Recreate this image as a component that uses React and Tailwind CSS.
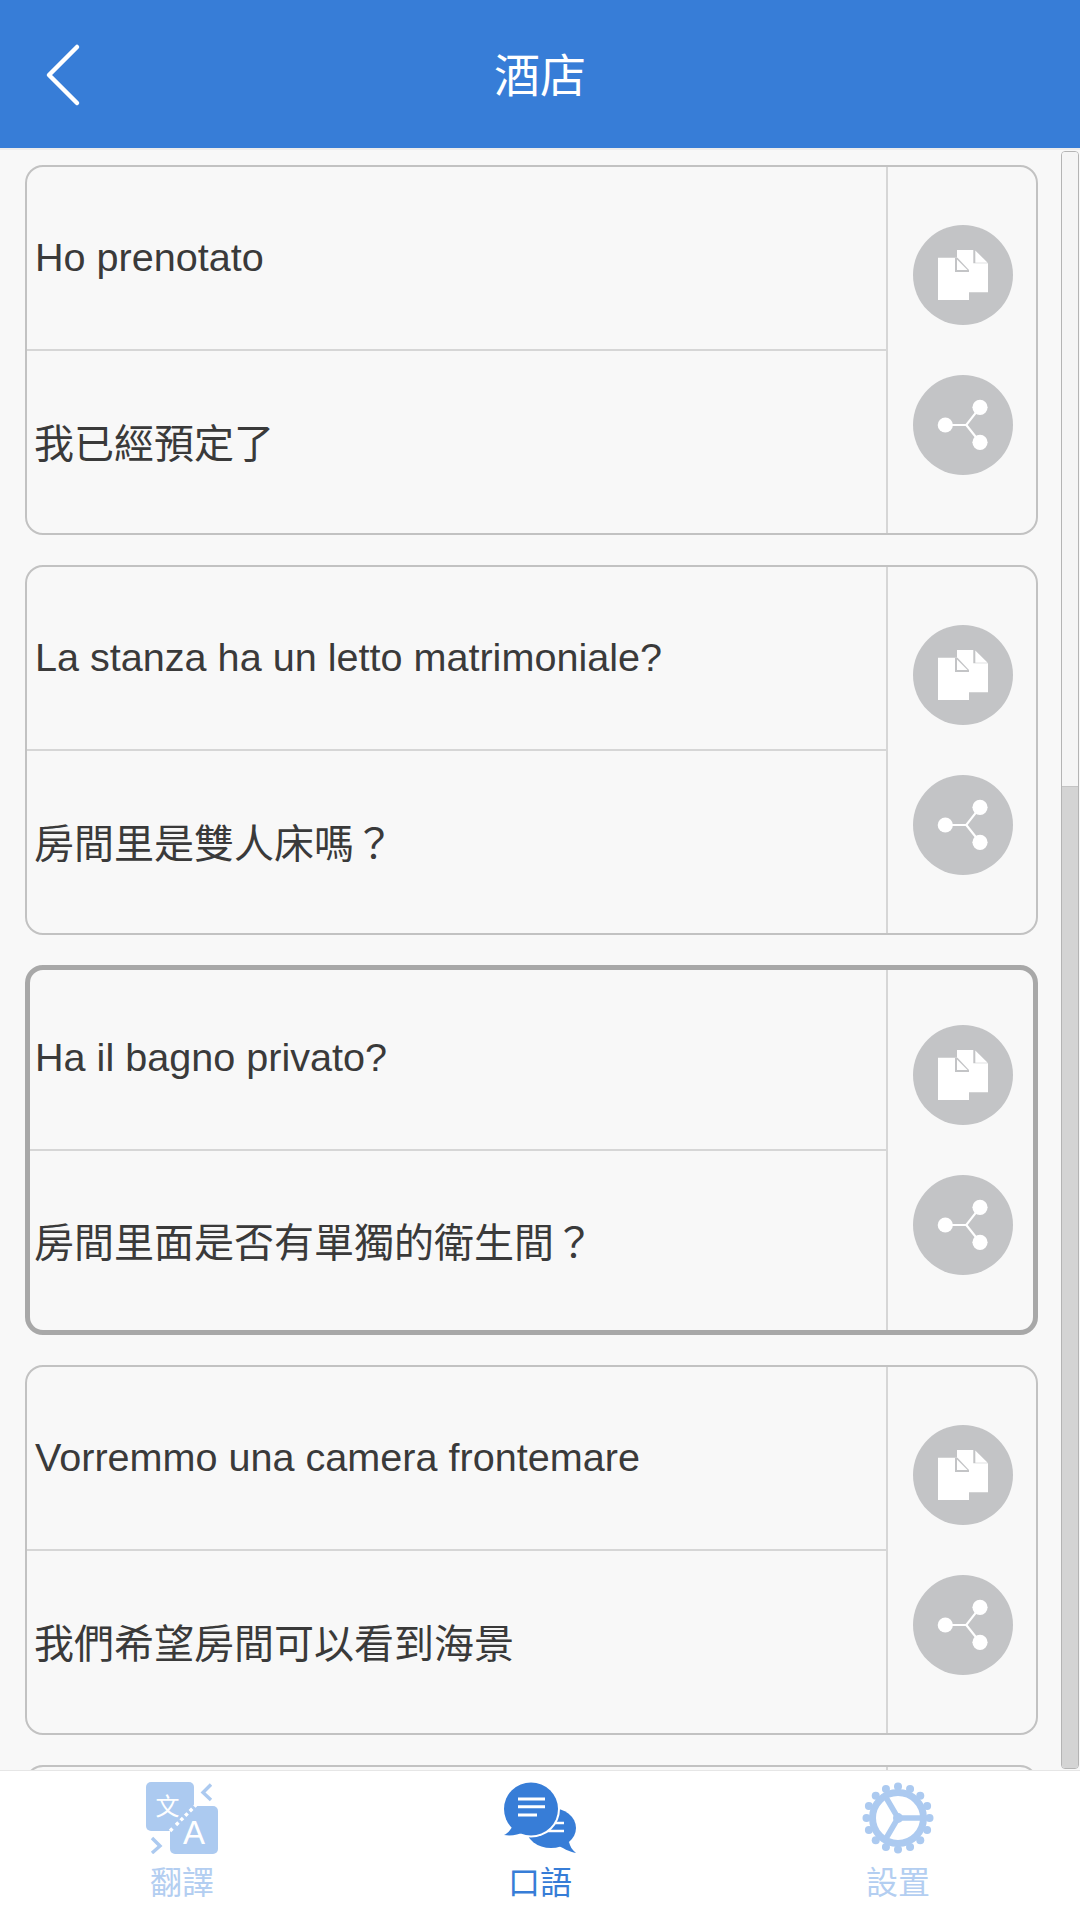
const FONT = "font-['Liberation_Sans','Noto_Sans_CJK_TC',sans-serif]";

const phrases = [
  { it: "Ho prenotato", zh: "我已經預定了" },
  { it: "La stanza ha un letto matrimoniale?", zh: "房間里是雙人床嗎？" },
  { it: "Ha il bagno privato?", zh: "房間里面是否有單獨的衛生間？", selected: true },
  { it: "Vorremmo una camera frontemare", zh: "我們希望房間可以看到海景" },
  { it: "", zh: "" },
];

function CopyIcon() {
  return (
    <svg viewBox="0 0 100 100" className="w-[100px] h-[100px]">
      <circle cx="50" cy="50" r="50" fill="#c3c4c6" />
      <path d="M44 25H60.3V38.3H75V67.3H44Z" fill="#fff" />
      <path d="M62.3 25.5L74.7 37.7H62.3Z" fill="#fff" />
      <path d="M25 32.7H44L56 45V75H25Z" fill="#fff" />
      <path d="M42 32.7H44.5L56 45V47H42Z" fill="#c3c4c6" />
      <path d="M44 34.500L54.5 45H44Z" fill="#fff" />
    </svg>
  );
}

function ShareIcon() {
  return (
    <svg viewBox="0 0 100 100" className="w-[100px] h-[100px]">
      <circle cx="50" cy="50" r="50" fill="#c3c4c6" />
      <path d="M32 50H53.3L67 32.3M53.3 50L67 67.3" fill="none" stroke="#fff" strokeWidth="2.2" />
      <circle cx="32.3" cy="50" r="7.6" fill="#fff" />
      <circle cx="67" cy="32.3" r="7.6" fill="#fff" />
      <circle cx="67" cy="67.3" r="7.6" fill="#fff" />
    </svg>
  );
}

function TranslateIcon() {
  return (
    <svg viewBox="0 0 72 72" className="w-[72px] h-[72px]">
      <rect x="0" y="0" width="48" height="49" rx="5" fill="#accaf0" />
      <rect x="24" y="24" width="48" height="48" rx="5" fill="#accaf0" />
      <path d="M24 49L27 46M30 43L50 23" fill="none" stroke="#fff" strokeWidth="3.4" strokeDasharray="3.5 3" />
      <path d="M65 2.5L57 10.5L65 18M6 56L14 64L6 71" fill="none" stroke="#accaf0" strokeWidth="3.4" />
      <text x="21.5" y="33" textAnchor="middle" fontSize="24" fill="#fff" fontFamily="Noto Sans CJK TC">文</text>
      <text x="48" y="62" textAnchor="middle" fontSize="33" fill="#fff" fontFamily="Liberation Sans">A</text>
    </svg>
  );
}

function ChatIcon() {
  return (
    <svg viewBox="0 0 72 72" className="w-[72px] h-[72px]">
      <ellipse cx="47" cy="46" rx="25" ry="20" fill="#377dd7" />
      <path d="M52 62C58 66 66 70 72 71C68 68 66 64 65 60Z" fill="#377dd7" />
      <path d="M40 41H60M40 49H60" stroke="#fff" strokeWidth="2.6" />
      <ellipse cx="27" cy="27" rx="29" ry="28.500" fill="#fff" />
      <path d="M9 42C8 47 4 51 0 53C7 54 14 53 20 50Z" fill="#377dd7" />
      <ellipse cx="27" cy="27" rx="27" ry="26.500" fill="#377dd7" />
      <path d="M14 17H41M14 24.800H41M14 33H33" stroke="#fff" strokeWidth="3" />
    </svg>
  );
}

function GearIcon() {
  const teeth = Array.from({ length: 16 }, (_, i) => (i * Math.PI) / 8);
  return (
    <svg viewBox="0 0 72 72" className="w-[72px] h-[72px]">
      {teeth.map((a, i) => (
        <circle key={i} cx={36 + 31.500 * Math.cos(a)} cy={36 + 31.500 * Math.sin(a)} r="4" fill="#accaf0" />
      ))}
      <circle cx="36" cy="36" r="25.500" fill="none" stroke="#accaf0" strokeWidth="7" />
      <path d="M60 36H36L24 15.500M36 36L24 56.500" fill="none" stroke="#accaf0" strokeWidth="5.500" />
      <circle cx="36" cy="36" r="5" fill="#accaf0" />
    </svg>
  );
}

function PhraseCard({ phrase }) {
  // the selected card has a thicker border, dividers stay at the same place
  const sel = phrase.selected;
  return (
    <div
      className={`flex shrink-0 h-[370px] w-[1013px] rounded-[18px] overflow-hidden ${
        sel ? "border-[5px] border-[#a8a8a8]" : "border-2 border-[#c2c2c2]"
      }`}
    >
      <div className="flex-1 flex flex-col">
        <div className={`flex items-center text-[39.6px] border-b-2 border-[#d6d6d6] ${sel ? "h-[181px] pl-[5px] pb-[3px]" : "h-[184px] pl-[8px]"}`}>
          {phrase.it}
        </div>
        <div className={`flex-1 flex items-center pt-[4px] ${sel ? "pl-[4px]" : "pl-[7px]"}`}>{phrase.zh}</div>
      </div>
      <div
        className={`flex flex-col items-center gap-[50px] border-l-2 border-[#d6d6d6] ${
          sel ? "w-[147px] pt-[55px] pl-[5px]" : "w-[150px] pt-[58px] pl-[2px]"
        }`}
      >
        <CopyIcon />
        <ShareIcon />
      </div>
    </div>
  );
}

export default function App() {
  const tabs = [
    { label: "翻譯", icon: <TranslateIcon />, color: "text-[#b3cef1]" },
    { label: "口語", icon: <ChatIcon />, color: "text-[#377dd7]" },
    { label: "設置", icon: <GearIcon />, color: "text-[#b3cef1]" },
  ];

  return (
    <div className={`${FONT} w-[1080px] h-[1920px] flex flex-col overflow-hidden bg-[#f8f8f8] text-[#3a3a3a] text-[40px]`}>
      <header className="h-[148px] shrink-0 bg-[#377dd7] flex items-center justify-center relative">
        <svg viewBox="0 0 40 64" className="absolute left-[44px] top-[43px] w-[40px] h-[64px]">
          <path d="M33 4L5 32L33 60" fill="none" stroke="#fff" strokeWidth="4.500" strokeLinecap="round" strokeLinejoin="round" />
        </svg>
        <h1 className="text-white text-[46px] font-normal pt-[4px]">酒店</h1>
      </header>
      <div className="h-[2px] shrink-0 bg-[#ececec]" />

      <main className="flex-1 min-h-0 flex">
        <div className="pl-[25px] pt-[15px] flex flex-col gap-[30px] overflow-hidden">
          {phrases.map((p, i) => (
            <PhraseCard key={i} phrase={p} />
          ))}
        </div>
        <div className="ml-[23px] my-px w-[18px] flex flex-col rounded-[4px] border border-[#b4b4b4] overflow-hidden">
          <div className="h-[635px] bg-[#f5f5f5] border-b border-[#c4c4c4]" />
          <div className="flex-1 bg-[#d4d4d4]" />
        </div>
      </main>

      <nav className="h-[150px] shrink-0 bg-white border-t border-[#e6e6e6] grid grid-cols-[358px_358px_358px] justify-center">
        {tabs.map((t) => (
          <div key={t.label} className={`flex flex-col items-center pt-[11px] ${t.color}`}>
            {t.icon}
            <span className="text-[32px] leading-[36px] mt-[11px]">{t.label}</span>
          </div>
        ))}
      </nav>
    </div>
  );
}
